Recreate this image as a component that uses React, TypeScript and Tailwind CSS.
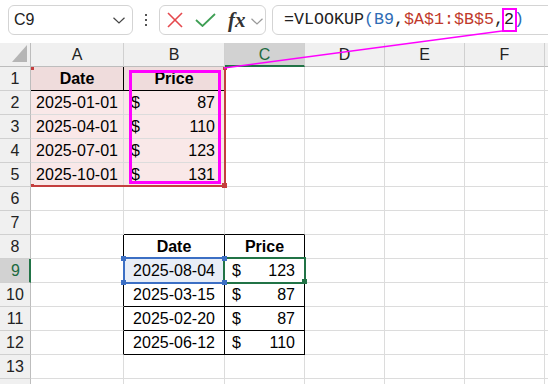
import React from 'react';

const SANS = "font-['Liberation_Sans',Arial,sans-serif]";

function cx(...a: (string | false | undefined)[]) {
  return a.filter(Boolean).join(' ');
}

const Money = ({ v }: { v: string }) => (
  <div className="flex w-full items-center justify-between pl-[7px] pr-[9px]">
    <span>$</span>
    <span>{v}</span>
  </div>
);

const t1: Record<number, [string, string]> = {
  2: ['2025-01-01', '87'],
  3: ['2025-04-01', '110'],
  4: ['2025-07-01', '123'],
  5: ['2025-10-01', '131'],
};
const t2: Record<number, [string, string]> = {
  9: ['2025-08-04', '123'],
  10: ['2025-03-15', '87'],
  11: ['2025-02-20', '87'],
  12: ['2025-06-12', '110'],
};

function dataCell(r: number, c: number) {
  const inT2 = r >= 8 && r <= 12;
  let rightBlack = false;
  let bottomBlack = false;
  let bg = 'bg-white';
  let content: React.ReactNode = null;
  if (c === 1) {
    rightBlack = r === 1 || inT2;
    bottomBlack = r === 1;
    if (r === 1) {
      bg = 'bg-[#efdcdc]';
      content = <span className="font-bold">Date</span>;
    } else if (t1[r]) {
      bg = 'bg-[#f9e8e8]';
      content = <span>{t1[r][0]}</span>;
    }
  } else if (c === 2) {
    rightBlack = inT2;
    bottomBlack = r === 1 || (r >= 7 && r <= 12);
    if (r === 1) {
      bg = 'bg-[#efdcdc]';
      content = <span className="font-bold">Price</span>;
    } else if (t1[r]) {
      bg = 'bg-[#f9e8e8]';
      content = <Money v={t1[r][1]} />;
    } else if (r === 8) {
      content = <span className="font-bold">Date</span>;
    } else if (t2[r]) {
      if (r === 9) bg = 'bg-[#e8eef8]';
      content = <span>{t2[r][0]}</span>;
    }
  } else if (c === 3) {
    rightBlack = inT2;
    bottomBlack = r >= 7 && r <= 12;
    if (r === 8) {
      content = <span className="font-bold">Price</span>;
    } else if (t2[r]) {
      content = <Money v={t2[r][1]} />;
    }
  }
  return (
    <div
      key={`${r}-${c}`}
      className={cx(
        'flex items-center justify-center overflow-hidden border-r border-b text-black',
        rightBlack ? 'border-r-black' : 'border-r-[#dcdcdc]',
        bottomBlack ? 'border-b-black' : 'border-b-[#dcdcdc]',
        bg
      )}
    >
      {content}
    </div>
  );
}

export default function App() {
  const rows = Array.from({ length: 14 }, (_, i) => i + 1);
  const letters = ['A', 'B', 'C', 'D', 'E', 'F'];

  return (
    <div className={cx('relative h-[384px] w-[548px] overflow-hidden bg-white text-[16px] leading-none', SANS)}>
      {/* Toolbar */}
      <div className="flex h-[43px] items-start pt-[5px]">
        <div className="ml-[8px] flex h-[30px] w-[125px] shrink-0 items-center justify-between rounded-[6px] border border-[#d4d4d4] pl-[5px] pr-[7px]">
          <span className="text-[16px] text-[#222]">C9</span>
          <svg width="12" height="7" viewBox="0 0 12 7">
            <polyline points="0.5,0.8 6,6 11.5,0.8" fill="none" stroke="#444" strokeWidth="1.2" />
          </svg>
        </div>
        <div className="ml-[12px] mt-[9px] flex w-[2px] shrink-0 flex-col gap-[3px]">
          <div className="h-[2px] w-[2px] bg-[#555]" />
          <div className="h-[2px] w-[2px] bg-[#555]" />
          <div className="h-[2px] w-[2px] bg-[#555]" />
        </div>
        <div className="ml-[12px] flex h-[30px] w-[107px] shrink-0 items-center rounded-[6px] border border-[#d4d4d4] pl-[7px]">
          <svg width="16" height="16" viewBox="0 0 16 16">
            <line x1="1" y1="1" x2="15" y2="15" stroke="#e5484d" strokeWidth="1.6" />
            <line x1="15" y1="1" x2="1" y2="15" stroke="#e5484d" strokeWidth="1.6" />
          </svg>
          <svg className="ml-[12px]" width="21" height="14" viewBox="0 0 21 14">
            <polyline points="1,7 7.5,13 20,1" fill="none" stroke="#3f9f55" strokeWidth="1.8" />
          </svg>
          <span className="ml-[12px] font-['Liberation_Serif',serif] text-[21px] italic font-semibold text-[#333] leading-none">fx</span>
          <svg className="ml-[5px] mt-[2px]" width="12" height="7" viewBox="0 0 12 7">
            <polyline points="0.5,0.8 6,6 11.5,0.8" fill="none" stroke="#999" strokeWidth="1.2" />
          </svg>
        </div>
        <div className="ml-[6px] flex h-[30px] w-[300px] shrink-0 items-center rounded-l-[6px] border border-[#d4d4d4] pl-[11px]">
          <span className="whitespace-pre font-['Liberation_Mono',monospace] text-[16.67px] text-[#222]">
            =VLOOKUP<span className="text-[#2f6db5]">(</span>
            <span className="text-[#2f6db5]">B9</span>,<span className="text-[#c0392b]">$A$1:$B$5</span>,2
            <span className="text-[#2f6db5]">)</span>
          </span>
        </div>
      </div>

      {/* Grid */}
      <div className="grid grid-cols-[31px_93px_101px_80px_80px_80px_80px_3px] auto-rows-[24px]">
        {/* header row */}
        <div className="border-r border-b border-r-[#bdbdbd] border-b-[#bdbdbd] bg-[#f0f0f0] pl-[12px] pt-[2px]">
          <svg width="15" height="17" viewBox="0 0 15 17">
            <polygon points="15,0 15,17 0,17" fill="#b5b5b5" />
          </svg>
        </div>
        {letters.map((l) =>
          l === 'C' ? (
            <div
              key={l}
              className="flex items-center justify-center border-r border-b-2 border-r-[#d0d0d0] border-b-[#217346] bg-[#d2d2d2] pt-[1px] text-[#1d6a3f]"
            >
              {l}
            </div>
          ) : (
            <div
              key={l}
              className="flex items-center justify-center border-r border-b border-r-[#d0d0d0] border-b-[#bdbdbd] bg-[#f0f0f0] text-[#222]"
            >
              {l}
            </div>
          )
        )}
        <div className="border-b border-b-[#bdbdbd] bg-[#f0f0f0]" />

        {rows.map((r) => (
          <React.Fragment key={r}>
            {r === 9 ? (
              <div className="flex items-center justify-center border-r-2 border-b border-r-[#217346] border-b-[#d0d0d0] bg-[#d2d2d2] pl-[2px] text-[#1d6a3f]">
                {r}
              </div>
            ) : (
              <div className="flex items-center justify-center border-r border-b border-r-[#bdbdbd] border-b-[#d0d0d0] bg-[#f0f0f0] text-[#222]">
                {r < 14 ? r : ''}
              </div>
            )}
            {[1, 2, 3, 4, 5, 6].map((c) => dataCell(r, c))}
            <div className="border-b border-b-[#dcdcdc]" />
          </React.Fragment>
        ))}
      </div>

      {/* Range highlight $A$1:$B$5 */}
      <div className="pointer-events-none absolute left-[31px] top-[67px] h-[120px] w-[195px] border-r-2 border-b-2 border-r-[#c43e3e] border-b-[#c43e3e]" />
      <div className="pointer-events-none absolute left-[31px] top-[67px] h-[3px] w-[3px] bg-[#c43e3e]" />
      <div className="pointer-events-none absolute left-[223px] top-[67px] h-[3px] w-[4px] bg-[#c43e3e]" />
      <div className="pointer-events-none absolute left-[31px] top-[184px] h-[3px] w-[3px] bg-[#c43e3e]" />
      <div className="pointer-events-none absolute left-[222px] top-[183px] h-[5px] w-[5px] bg-[#c43e3e]" />

      {/* Magenta annotation box */}
      <div className="pointer-events-none absolute left-[129px] top-[70px] h-[114px] w-[92px] border-[3px] border-[#ff00ff]" />

      {/* C9 selection */}
      <div className="pointer-events-none absolute left-[223px] top-[257px] h-[27px] w-[83px] border-2 border-[#217346]" />
      <div className="pointer-events-none absolute left-[302px] top-[279px] h-[5px] w-[5px] bg-[#217346]" />

      {/* B9 reference highlight */}
      <div className="pointer-events-none absolute left-[123px] top-[257px] h-[27px] w-[101px] border-l-2 border-t-2 border-b-2 border-l-[#3c6fc4] border-t-[#3c6fc4] border-b-[#3c6fc4]" />
      <div className="pointer-events-none absolute left-[121px] top-[256px] h-[5px] w-[5px] bg-[#3c6fc4]" />
      <div className="pointer-events-none absolute left-[222px] top-[256px] h-[5px] w-[5px] bg-[#3c6fc4]" />
      <div className="pointer-events-none absolute left-[121px] top-[280px] h-[5px] w-[5px] bg-[#3c6fc4]" />
      <div className="pointer-events-none absolute left-[222px] top-[280px] h-[5px] w-[5px] bg-[#3c6fc4]" />

      {/* "2" argument box in formula */}
      <div className="pointer-events-none absolute left-[502px] top-[8px] h-[24px] w-[15px] border-2 border-[#ff00ff]" />

      {/* connecting line */}
      <svg className="pointer-events-none absolute left-0 top-0" width="548" height="384" viewBox="0 0 548 384">
        <line x1="224" y1="68" x2="502" y2="31" stroke="#ff00ff" strokeWidth="1.3" />
      </svg>
    </div>
  );
}
